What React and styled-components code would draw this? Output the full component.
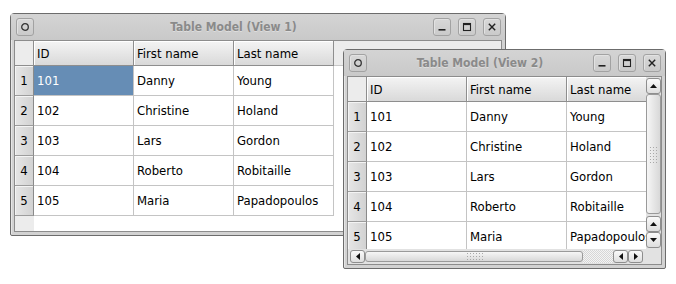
import React from "react";
import styled, { createGlobalStyle } from "styled-components";

const people = [
  { id: "101", first: "Danny", last: "Young" },
  { id: "102", first: "Christine", last: "Holand" },
  { id: "103", first: "Lars", last: "Gordon" },
  { id: "104", first: "Roberto", last: "Robitaille" },
  { id: "105", first: "Maria", last: "Papadopoulos" },
];

const FONT = `"DejaVu Sans Condensed", "DejaVu Sans", sans-serif`;

const GlobalStyle = createGlobalStyle`
  html, body {
    margin: 0;
    padding: 0;
    background: #ffffff;
  }
  body {
    font-family: ${FONT};
  }
`;

function WindowIcon({ kind }) {
  if (kind === "menu") {
    return (
      <svg width="10" height="10" viewBox="0 0 10 10">
        <circle cx="5" cy="5" r="3.3" fill="none" stroke="#333" strokeWidth="1.3" />
      </svg>
    );
  }
  if (kind === "min") {
    return (
      <svg width="10" height="10" viewBox="0 0 10 10">
        <rect x="1.5" y="7" width="7" height="1.6" fill="#222" />
      </svg>
    );
  }
  if (kind === "max") {
    return (
      <svg width="10" height="10" viewBox="0 0 10 10">
        <rect x="1.5" y="1.5" width="7" height="7" fill="none" stroke="#222" strokeWidth="1.1" />
        <rect x="1.5" y="1.5" width="7" height="1.6" fill="#222" />
      </svg>
    );
  }
  return (
    <svg width="10" height="10" viewBox="0 0 10 10">
      <path d="M1.8 1.8 L8.2 8.2 M8.2 1.8 L1.8 8.2" stroke="#222" strokeWidth="1.4" />
    </svg>
  );
}

function Arrow({ dir }) {
  const points = {
    up: "0,4 3.5,0 7,4",
    down: "0,0 3.5,4 7,0",
    left: "4,0 0,3.5 4,7",
    right: "0,0 4,3.5 0,7",
  }[dir];
  const vertical = dir === "up" || dir === "down";
  return (
    <svg width={vertical ? 7 : 4} height={vertical ? 4 : 7}>
      <polygon points={points} fill="#111" />
    </svg>
  );
}

function PeopleTable({ selectedRow }) {
  return (
    <Grid>
      <Corner />
      <HeaderCell>ID</HeaderCell>
      <HeaderCell>First name</HeaderCell>
      <HeaderCell>Last name</HeaderCell>
      <HeaderFill />
      {people.map((p, i) => (
        <React.Fragment key={p.id}>
          <RowHeader>{i + 1}</RowHeader>
          <Cell $selected={i === selectedRow}>{p.id}</Cell>
          <Cell>{p.first}</Cell>
          <Cell>{p.last}</Cell>
          <EmptyCell />
        </React.Fragment>
      ))}
    </Grid>
  );
}

function Window({ left, top, width, height, title, children }) {
  return (
    <Frame $left={left} $top={top} $width={width} $height={height}>
      <TitleBar>
        <TitleButton>
          <WindowIcon kind="menu" />
        </TitleButton>
        <Title>{title}</Title>
        <ButtonGroup>
          <TitleButton>
            <WindowIcon kind="min" />
          </TitleButton>
          <TitleButton>
            <WindowIcon kind="max" />
          </TitleButton>
          <TitleButton>
            <WindowIcon kind="close" />
          </TitleButton>
        </ButtonGroup>
      </TitleBar>
      {children}
    </Frame>
  );
}

export default function App() {
  return (
    <>
      <GlobalStyle />
      <Desktop>
        <Window left={10} top={13} width={496} height={223} title="Table Model (View 1)">
          <Content>
            <PeopleTable selectedRow={0} />
          </Content>
        </Window>
        <Window left={343} top={49} width={323} height={220} title="Table Model (View 2)">
          <ScrollContent>
            <Viewport>
              <PeopleTable selectedRow={-1} />
            </Viewport>
            <VScroll>
              <ScrollButton>
                <Arrow dir="up" />
              </ScrollButton>
              <VThumb>
                <Grip $vertical />
              </VThumb>
              <ScrollButton>
                <Arrow dir="up" />
              </ScrollButton>
              <ScrollButton>
                <Arrow dir="down" />
              </ScrollButton>
            </VScroll>
            <HScroll>
              <ScrollButton $wide>
                <Arrow dir="left" />
              </ScrollButton>
              <HThumb>
                <Grip />
              </HThumb>
              <Track />
              <ScrollButton $wide>
                <Arrow dir="left" />
              </ScrollButton>
              <ScrollButton $wide>
                <Arrow dir="right" />
              </ScrollButton>
            </HScroll>
            <ScrollCorner />
          </ScrollContent>
        </Window>
      </Desktop>
    </>
  );
}

const Desktop = styled.div`
  position: relative;
  width: 676px;
  height: 284px;
  overflow: hidden;
  background: #ffffff;
`;

const Frame = styled.div`
  position: absolute;
  left: ${(p) => p.$left}px;
  top: ${(p) => p.$top}px;
  width: ${(p) => p.$width}px;
  height: ${(p) => p.$height}px;
  box-sizing: border-box;
  display: flex;
  flex-direction: column;
  padding: 0 3px 3px 3px;
  border: 1px solid #6c6c6c;
  border-radius: 4px 4px 2px 2px;
  background: #d2d2d2;
  box-shadow: inset 1px 1px 0 #e6e6e6;
`;

const TitleBar = styled.div`
  height: 26px;
  flex: none;
  display: flex;
  align-items: center;
  margin: 0 -3px;
  padding: 0 4px 0 5px;
  background: linear-gradient(#d4d4d4, #c9c9c9);
`;

const Title = styled.div`
  flex: 1;
  text-align: center;
  font-family: ${FONT};
  font-weight: bold;
  font-size: 12px;
  color: #8a8a8a;
  text-shadow: 0 1px 0 #dedede;
  white-space: nowrap;
  overflow: hidden;
`;

const ButtonGroup = styled.div`
  display: flex;
  gap: 7px;
`;

const TitleButton = styled.div`
  width: 18px;
  height: 18px;
  box-sizing: border-box;
  display: flex;
  align-items: center;
  justify-content: center;
  border: 1px solid #a2a2a2;
  border-radius: 3px;
  background: linear-gradient(#d8d8d8, #cacaca);
  box-shadow: inset 1px 1px 0 #e2e2e2;
`;

const Content = styled.div`
  flex: 1;
  overflow: hidden;
  border: 1px solid #8c8c8c;
  background: linear-gradient(to right, #ececec 19px, #ffffff 19px);
`;

const Grid = styled.div`
  display: grid;
  grid-template-columns: 19px 100px 100px 100px 1fr;
  grid-template-rows: 25px repeat(5, 30px);
  font-family: ${FONT};
  font-size: 13px;
  color: #000;
`;

const HeaderCell = styled.div`
  box-sizing: border-box;
  display: flex;
  align-items: center;
  padding: 0 3px;
  white-space: nowrap;
  overflow: hidden;
  border-right: 1px solid #8e8e8e;
  border-bottom: 1px solid #8e8e8e;
  background: linear-gradient(#f4f4f4, #d9d9d9);
  box-shadow: inset 1px 1px 0 #ffffff;
`;

const Corner = styled.div`
  box-sizing: border-box;
  background: #ececec;
  border-right: 1px solid #8e8e8e;
  border-bottom: 1px solid #8e8e8e;
`;

const HeaderFill = styled.div`
  background: #ececec;
  border-bottom: 1px solid #c8c8c8;
`;

const RowHeader = styled.div`
  box-sizing: border-box;
  display: flex;
  align-items: center;
  justify-content: center;
  border-right: 1px solid #8a8a8a;
  border-bottom: 1px solid #9c9c9c;
  background: linear-gradient(to right, #e6e6e6, #d2d2d2);
  box-shadow: inset 1px 1px 0 #f4f4f4;
`;

const Cell = styled.div`
  box-sizing: border-box;
  display: flex;
  align-items: center;
  padding: 0 3px;
  white-space: nowrap;
  overflow: hidden;
  border-right: 1px solid #c4c4c4;
  border-bottom: 1px solid #c4c4c4;
  background: ${(p) => (p.$selected ? "#668db5" : "#ffffff")};
  color: ${(p) => (p.$selected ? "#ffffff" : "#000000")};
`;

const EmptyCell = styled.div`
  background: #ffffff;
`;

const ScrollContent = styled.div`
  flex: 1;
  overflow: hidden;
  border: 1px solid #8c8c8c;
  display: grid;
  grid-template-columns: 1fr 15px;
  grid-template-rows: 1fr 15px;
  background: #ececec;
`;

const Viewport = styled.div`
  overflow: hidden;
  background: linear-gradient(to right, #ececec 19px, #ffffff 19px);
`;

const VScroll = styled.div`
  display: flex;
  flex-direction: column;
  padding: 1px 0;
  background: #e2e2e2;
`;

const ScrollButton = styled.div`
  flex: none;
  width: 15px;
  height: ${(p) => (p.$wide ? 13 : 16)}px;
  box-sizing: border-box;
  display: flex;
  align-items: center;
  justify-content: center;
  border: 1px solid #8e8e8e;
  border-radius: 3px;
  background: linear-gradient(#fafafa, #dedede);
`;

const VThumb = styled.div`
  flex: 1;
  margin-bottom: 2px;
  box-sizing: border-box;
  display: flex;
  align-items: center;
  justify-content: center;
  border: 1px solid #9a9a9a;
  border-radius: 3px;
  background: linear-gradient(to right, #f6f6f6, #d8d8d8);
`;

const HThumb = styled.div`
  width: 218px;
  flex: none;
  box-sizing: border-box;
  display: flex;
  align-items: center;
  justify-content: center;
  border: 1px solid #9a9a9a;
  border-radius: 3px;
  background: linear-gradient(#f6f6f6, #d8d8d8);
`;

const Grip = styled.div`
  width: ${(p) => (p.$vertical ? 9 : 17)}px;
  height: ${(p) => (p.$vertical ? 17 : 9)}px;
  background: radial-gradient(circle, #a8a8a8 0.7px, transparent 0.9px) 0 0 / 3px 3px;
`;

const HScroll = styled.div`
  display: flex;
  align-items: center;
  padding: 0 3px 0 2px;
  background: #e2e2e2;
`;

const Track = styled.div`
  flex: 1;
  align-self: stretch;
  margin: 1px 0;
  background: repeating-conic-gradient(#d6d6d6 0 25%, #f4f4f4 0 50%) 0 0 / 2px 2px;
`;

const ScrollCorner = styled.div`
  background: #e2e2e2;
`;
